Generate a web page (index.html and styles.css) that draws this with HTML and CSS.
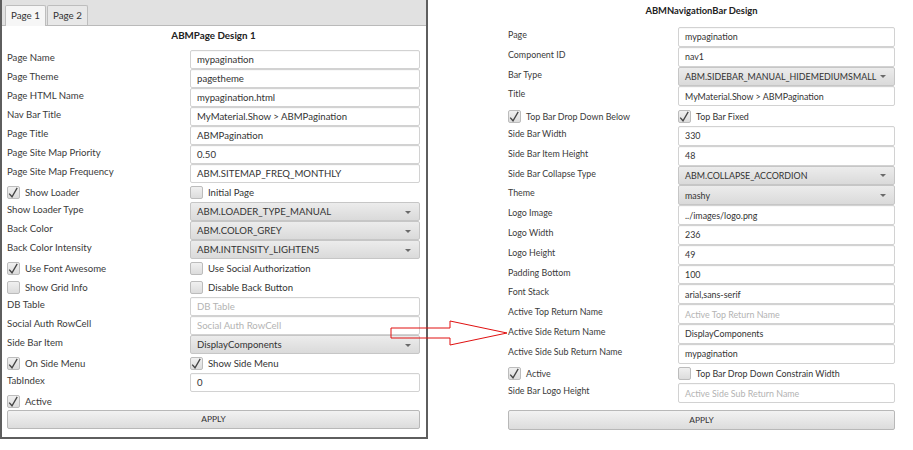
FILE: index.html
```html
<!DOCTYPE html>
<html>
<head>
<meta charset="utf-8">
<link rel="stylesheet" href="styles.css">
</head>
<body>
<div class="window">
  <div class="tabbar">
    <div class="tab active">Page 1</div>
    <div class="tab">Page 2</div>
  </div>
  <div class="form form-left">
    <div class="title">ABMPage Design 1</div>
    <div class="row"><div class="lbl">Page Name</div><div class="field"><div class="input">mypagination</div></div></div>
    <div class="row"><div class="lbl">Page Theme</div><div class="field"><div class="input">pagetheme</div></div></div>
    <div class="row"><div class="lbl">Page HTML Name</div><div class="field"><div class="input">mypagination.html</div></div></div>
    <div class="row"><div class="lbl">Nav Bar Title</div><div class="field"><div class="input">MyMaterial.Show &gt; ABMPagination</div></div></div>
    <div class="row"><div class="lbl">Page Title</div><div class="field"><div class="input">ABMPagination</div></div></div>
    <div class="row"><div class="lbl">Page Site Map Priority</div><div class="field"><div class="input">0.50</div></div></div>
    <div class="row"><div class="lbl">Page Site Map Frequency</div><div class="field"><div class="input">ABM.SITEMAP_FREQ_MONTHLY</div></div></div>
    <div class="row crow">
      <div class="lbl"><span class="check on"><svg viewBox="0 0 13 13"><path d="M2.2 7.6 L5 10.8 L10.2 1.8"/></svg></span>Show Loader</div>
      <div class="field"><span class="check"></span>Initial Page</div>
    </div>
    <div class="row"><div class="lbl">Show Loader Type</div><div class="field"><div class="select">ABM.LOADER_TYPE_MANUAL</div></div></div>
    <div class="row"><div class="lbl">Back Color</div><div class="field"><div class="select">ABM.COLOR_GREY</div></div></div>
    <div class="row"><div class="lbl">Back Color Intensity</div><div class="field"><div class="select">ABM.INTENSITY_LIGHTEN5</div></div></div>
    <div class="row crow">
      <div class="lbl"><span class="check on"><svg viewBox="0 0 13 13"><path d="M2.2 7.6 L5 10.8 L10.2 1.8"/></svg></span>Use Font Awesome</div>
      <div class="field"><span class="check"></span>Use Social Authorization</div>
    </div>
    <div class="row crow">
      <div class="lbl"><span class="check"></span>Show Grid Info</div>
      <div class="field"><span class="check"></span>Disable Back Button</div>
    </div>
    <div class="row"><div class="lbl">DB Table</div><div class="field"><div class="input ph">DB Table</div></div></div>
    <div class="row"><div class="lbl">Social Auth RowCell</div><div class="field"><div class="input ph">Social Auth RowCell</div></div></div>
    <div class="row"><div class="lbl">Side Bar Item</div><div class="field"><div class="select">DisplayComponents</div></div></div>
    <div class="row crow">
      <div class="lbl"><span class="check on"><svg viewBox="0 0 13 13"><path d="M2.2 7.6 L5 10.8 L10.2 1.8"/></svg></span>On Side Menu</div>
      <div class="field"><span class="check on"><svg viewBox="0 0 13 13"><path d="M2.2 7.6 L5 10.8 L10.2 1.8"/></svg></span>Show Side Menu</div>
    </div>
    <div class="row"><div class="lbl">TabIndex</div><div class="field"><div class="input">0</div></div></div>
    <div class="row crow last">
      <div class="lbl"><span class="check on"><svg viewBox="0 0 13 13"><path d="M2.2 7.6 L5 10.8 L10.2 1.8"/></svg></span>Active</div>
      <div class="field"></div>
    </div>
    <div class="apply">APPLY</div>
  </div>
</div>

<div class="form form-right">
  <div class="title">ABMNavigationBar Design</div>
  <div class="row"><div class="lbl">Page</div><div class="field"><div class="input">mypagination</div></div></div>
  <div class="row"><div class="lbl">Component ID</div><div class="field"><div class="input">nav1</div></div></div>
  <div class="row"><div class="lbl">Bar Type</div><div class="field"><div class="select">ABM.SIDEBAR_MANUAL_HIDEMEDIUMSMALL</div></div></div>
  <div class="row"><div class="lbl">Title</div><div class="field"><div class="input">MyMaterial.Show &gt; ABMPagination</div></div></div>
  <div class="row crow">
    <div class="lbl"><span class="check on"><svg viewBox="0 0 13 13"><path d="M2.2 7.6 L5 10.8 L10.2 1.8"/></svg></span>Top Bar Drop Down Below</div>
    <div class="field"><span class="check on"><svg viewBox="0 0 13 13"><path d="M2.2 7.6 L5 10.8 L10.2 1.8"/></svg></span>Top Bar Fixed</div>
  </div>
  <div class="row"><div class="lbl">Side Bar Width</div><div class="field"><div class="input">330</div></div></div>
  <div class="row"><div class="lbl">Side Bar Item Height</div><div class="field"><div class="input">48</div></div></div>
  <div class="row"><div class="lbl">Side Bar Collapse Type</div><div class="field"><div class="select">ABM.COLLAPSE_ACCORDION</div></div></div>
  <div class="row"><div class="lbl">Theme</div><div class="field"><div class="select">mashy</div></div></div>
  <div class="row"><div class="lbl">Logo Image</div><div class="field"><div class="input">../images/logo.png</div></div></div>
  <div class="row"><div class="lbl">Logo Width</div><div class="field"><div class="input">236</div></div></div>
  <div class="row"><div class="lbl">Logo Height</div><div class="field"><div class="input">49</div></div></div>
  <div class="row"><div class="lbl">Padding Bottom</div><div class="field"><div class="input">100</div></div></div>
  <div class="row"><div class="lbl">Font Stack</div><div class="field"><div class="input">arial,sans-serif</div></div></div>
  <div class="row"><div class="lbl">Active Top Return Name</div><div class="field"><div class="input ph">Active Top Return Name</div></div></div>
  <div class="row"><div class="lbl">Active Side Return Name</div><div class="field"><div class="input">DisplayComponents</div></div></div>
  <div class="row"><div class="lbl">Active Side Sub Return Name</div><div class="field"><div class="input">mypagination</div></div></div>
  <div class="row crow">
    <div class="lbl"><span class="check on"><svg viewBox="0 0 13 13"><path d="M2.2 7.6 L5 10.8 L10.2 1.8"/></svg></span>Active</div>
    <div class="field"><span class="check"></span>Top Bar Drop Down Constrain Width</div>
  </div>
  <div class="row"><div class="lbl">Side Bar Logo Height</div><div class="field"><div class="input ph">Active Side Sub Return Name</div></div></div>
  <div class="apply">APPLY</div>
</div>

<svg class="arrow" width="913" height="450" viewBox="0 0 913 450">
  <polygon points="391,328 450,328 450,321 507,333 450,345 450,338 391,338"/>
</svg>
</body>
</html>
```

FILE: styles.css
```css
* { box-sizing: border-box; }
html, body { margin: 0; padding: 0; background: #fff; }
body {
  width: 913px;
  height: 450px;
  position: relative;
  display: flex;
  align-items: flex-start;
  font-family: Lato, "Open Sans", sans-serif;
  color: #333;
  overflow: hidden;
}

.window {
  width: 428px;
  height: 439px;
  border: 2px solid #5e5e5e;
  border-top: none;
  background: #fff;
  display: flex;
  flex-direction: column;
}

.tabbar {
  height: 26px;
  flex: none;
  background: #e1e1e1;
  border-bottom: 1px solid #bababa;
  display: flex;
  align-items: flex-end;
  padding-left: 3px;
  gap: 1px;
}
.tab {
  height: 20px;
  padding: 0 5px;
  font-size: 9.8px;
  line-height: 19px;
  border: 1px solid #bdbdbd;
  border-bottom: none;
  border-radius: 2px 2px 0 0;
  background: #e8e8e8;
  color: #333;
}
.tab.active {
  background: #f6f6f6;
  height: 21px;
  margin-bottom: -1px;
}

.form { display: flex; flex-direction: column; }
.form-left { padding: 0 6px 0 5px; font-size: 9.6px; }
.form-left .title { height: 24px; line-height: 19px; font-size: 9.8px; }
.form-left .lbl { width: 183px; }
.form-left .row { height: 19px; }
.form-left .row.last { height: 18px; }

.form-right {
  width: 387px;
  margin-left: 80px;
  font-size: 8.9px;
}
.form-right .title { height: 27px; line-height: 22px; font-size: 9.4px; }
.form-right .lbl { width: 170px; line-height: 16px; }
.form-right .row { height: 19.8px; }
.form-right .apply { margin-top: 6.5px; height: 20px; line-height: 18px; }

.title { text-align: center; font-weight: bold; color: #222; }

.row { display: flex; flex: none; }
.lbl {
  flex: none;
  line-height: 15px;
  white-space: nowrap;
  color: #3a3a3a;
}
.field {
  flex: 1;
  display: flex;
  align-items: center;
  white-space: nowrap;
  min-width: 0;
}
.crow { align-items: center; }
.crow .lbl { display: flex; align-items: center; line-height: normal; }

.input, .select {
  width: 100%;
  height: 100%;
  border: 1px solid #d2d2d2;
  border-radius: 2px;
  padding: 0 6px;
  display: flex;
  align-items: center;
  white-space: nowrap;
  overflow: hidden;
  color: #333;
}
.input { background: #fff; box-shadow: inset 0 1px 1px rgba(0,0,0,0.03); }
.input.ph { color: #b3b3b3; }
.select {
  position: relative;
  background: linear-gradient(#ececec, #dadada);
  border-color: #c6c6c6;
}
.select::after {
  content: "";
  position: absolute;
  right: 8px;
  top: 50%;
  margin-top: -1px;
  border-left: 3px solid transparent;
  border-right: 3px solid transparent;
  border-top: 3px solid #6a6a6a;
}

.check {
  flex: none;
  width: 13px;
  height: 13px;
  margin-right: 5px;
  border: 1px solid #bcbcbc;
  border-radius: 2px;
  background: linear-gradient(#f0f0f0, #dcdcdc);
  display: inline-block;
  position: relative;
}
.check svg {
  position: absolute;
  left: -1px;
  top: -1px;
  width: 13px;
  height: 13px;
  overflow: visible;
}
.check svg path {
  fill: none;
  stroke: #444;
  stroke-width: 1.3;
}

.apply {
  flex: none;
  height: 19px;
  border: 1px solid #b8b8b8;
  border-radius: 2px;
  background: linear-gradient(#f2f2f2, #dcdcdc);
  text-align: center;
  font-size: 8.4px;
  line-height: 17px;
  color: #333;
}

.arrow {
  position: absolute;
  left: 0;
  top: 0;
  pointer-events: none;
}
.arrow polygon {
  fill: none;
  stroke: #e01010;
  stroke-width: 1;
}
```
